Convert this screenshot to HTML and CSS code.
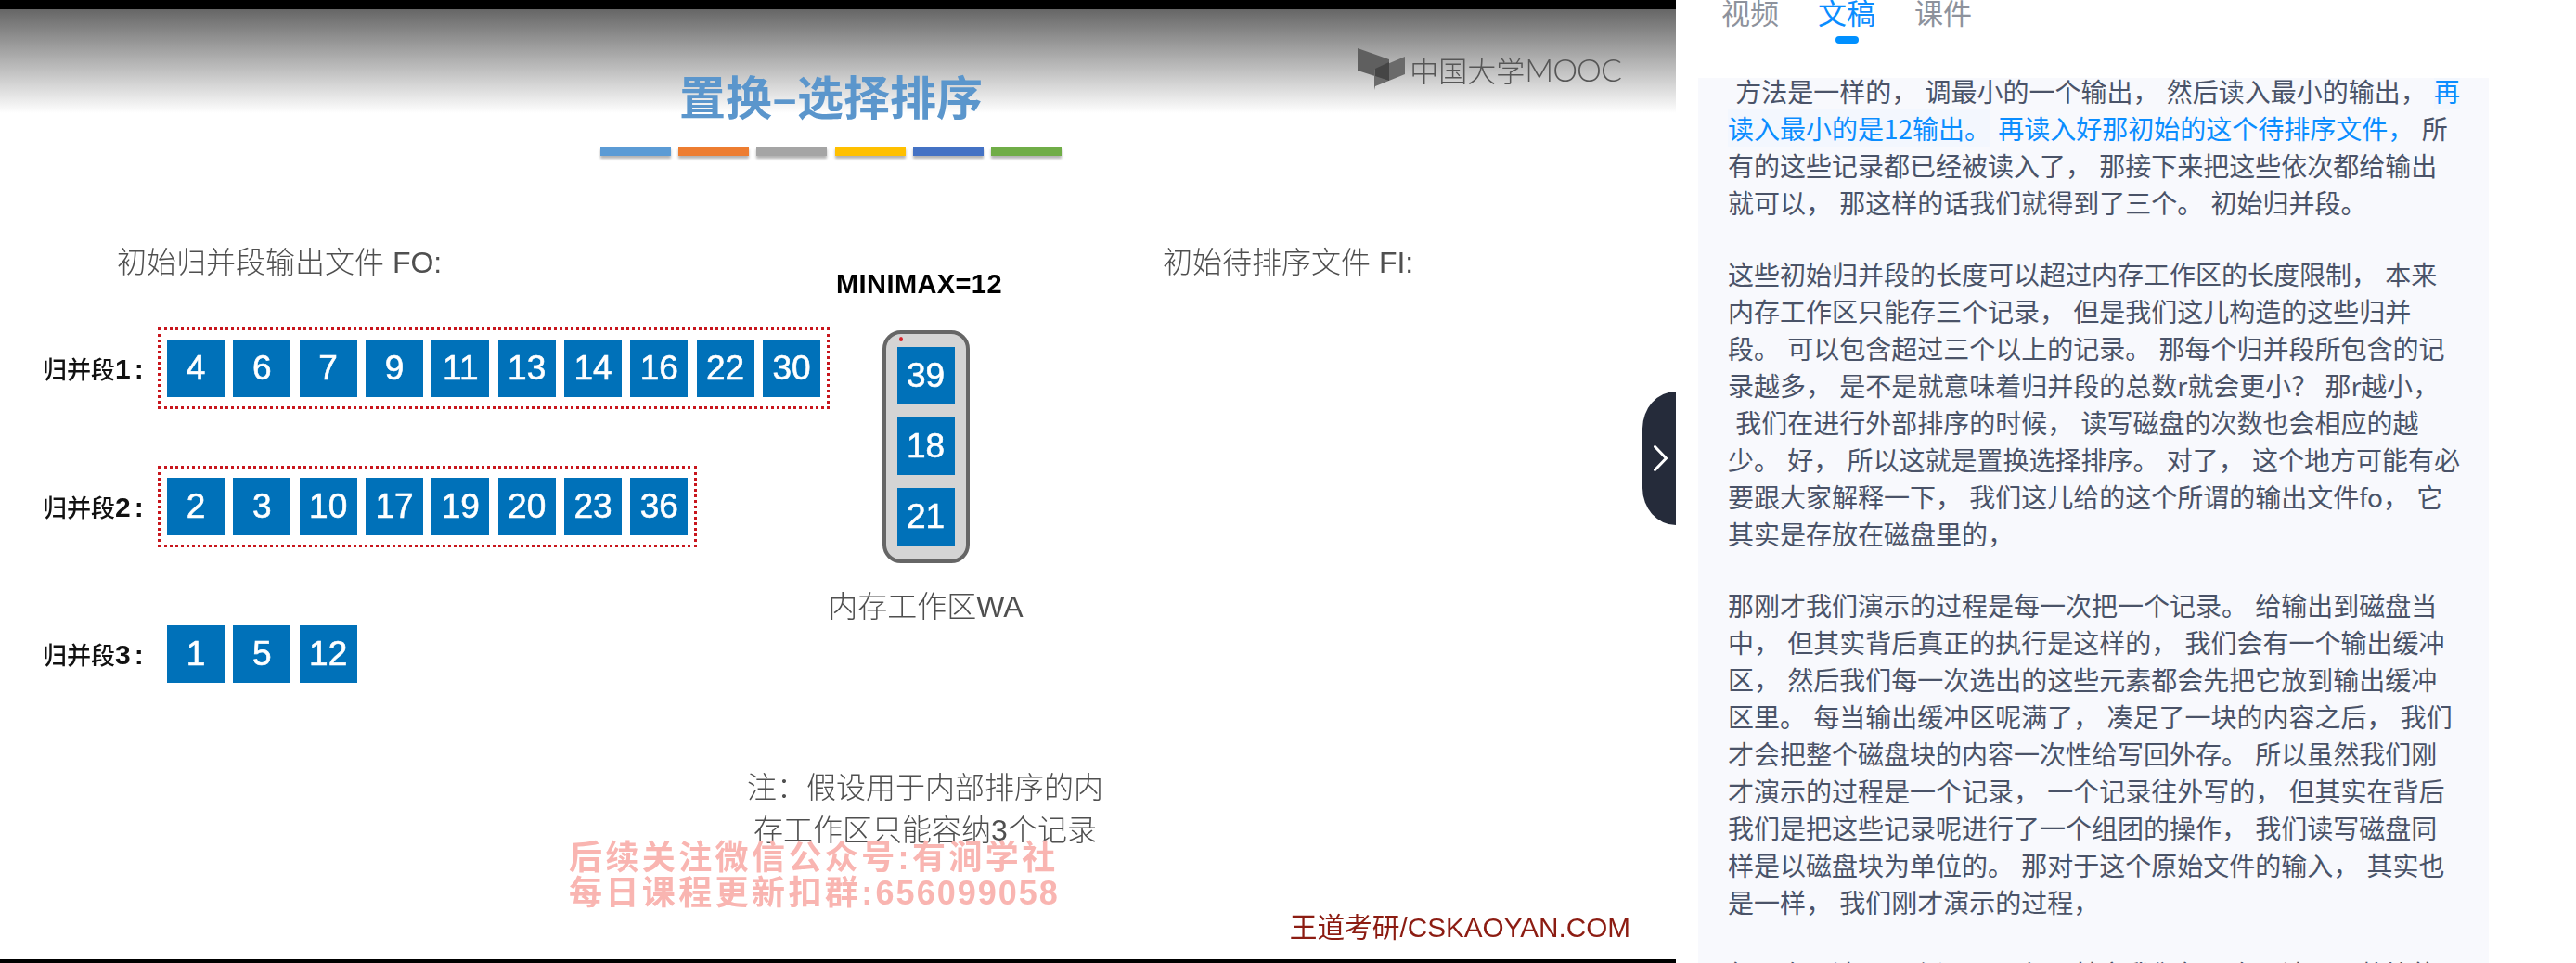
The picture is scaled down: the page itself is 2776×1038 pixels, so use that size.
FILE: index.html
```html
<!DOCTYPE html>
<html lang="zh-CN">
<head>
    <meta charset="UTF-8">
    <meta name="viewport" content="width=device-width, initial-scale=1.0">
    <title>置换-选择排序</title>
    <link rel="stylesheet" href="styles.css">
</head>
<body>
    <div class="page">
        <div class="video">
            <div class="slide">
                <div class="slide-head">
                    <div class="title-block">
                        <h1 class="slide-title">置换–选择排序</h1>
                        <div class="title-bars">
                            <span class="bar bar-blue"></span>
                            <span class="bar bar-orange"></span>
                            <span class="bar bar-gray"></span>
                            <span class="bar bar-yellow"></span>
                            <span class="bar bar-navy"></span>
                            <span class="bar bar-green"></span>
                        </div>
                    </div>
                    <div class="mooc-logo">
                        <svg class="mooc-mark" width="52" height="46" viewBox="0 0 52 46">
                            <path d="M0 1 L34 13 L34 36 L0 25 Z" fill="#5f5f5f"/>
                            <path d="M18 24 L51 10 L51 29 L19 42 L18 46 Z" fill="#6a6a6a"/>
                            <path d="M19 23 L34 16 L34 36 L19 31 Z" fill="#454545"/>
                        </svg>
                        <span class="mooc-cn">中国大学</span><span class="mooc-en">MOOC</span>
                    </div>
                </div>

                <div class="slide-main">
                    <div class="output-col">
                        <div class="file-label output-label">初始归并段输出文件 FO:</div>
                        <div class="segment first">
                            <div class="seg-name"><span class="seg-cn">归并段</span>1:</div>
                            <div class="seg-box">
                                <div class="cell">4</div>
                                <div class="cell">6</div>
                                <div class="cell">7</div>
                                <div class="cell">9</div>
                                <div class="cell">11</div>
                                <div class="cell">13</div>
                                <div class="cell">14</div>
                                <div class="cell">16</div>
                                <div class="cell">22</div>
                                <div class="cell">30</div>
                            </div>
                        </div>
                        <div class="segment second">
                            <div class="seg-name"><span class="seg-cn">归并段</span>2:</div>
                            <div class="seg-box">
                                <div class="cell">2</div>
                                <div class="cell">3</div>
                                <div class="cell">10</div>
                                <div class="cell">17</div>
                                <div class="cell">19</div>
                                <div class="cell">20</div>
                                <div class="cell">23</div>
                                <div class="cell">36</div>
                            </div>
                        </div>
                        <div class="segment third">
                            <div class="seg-name"><span class="seg-cn">归并段</span>3:</div>
                            <div class="seg-box open">
                                <div class="cell">1</div>
                                <div class="cell">5</div>
                                <div class="cell">12</div>
                            </div>
                        </div>
                    </div>

                    <div class="memory-col">
                        <div class="minimax">MINIMAX=12</div>
                        <div class="memory-box">
                            <span class="memory-dot"></span>
                            <div class="cell">39</div>
                            <div class="cell">18</div>
                            <div class="cell">21</div>
                        </div>
                        <div class="file-label memory-label">内存工作区WA</div>
                    </div>

                    <div class="file-label input-label">初始待排序文件 FI:</div>
                </div>

                <div class="slide-note">
                    <div>注：假设用于内部排序的内</div>
                    <div>存工作区只能容纳3个记录</div>
                </div>
                <div class="slide-credit">王道考研/CSKAOYAN.COM</div>

                <div class="watermark">
                    <div>后续关注微信公众号:有涧学社</div>
                    <div>每日课程更新扣群:<span class="wm-num">656099058</span></div>
                </div>
            </div>

            <div class="collapse-tab">
                <svg width="15" height="28" viewBox="0 0 15 28">
                    <path d="M1.5 1.5 L13.5 14 L1.5 26.5" fill="none" stroke="#fff" stroke-width="3" stroke-linecap="round" stroke-linejoin="round"/>
                </svg>
            </div>
        </div>

        <div class="sidebar">
            <div class="tabs">
                <div class="tab">视频</div>
                <div class="tab active">文稿</div>
                <div class="tab">课件</div>
            </div>
            <div class="transcript">
<p class="para"> 方法是一样的， 调最小的一个输出， 然后读入最小的输出， <span class="now now-bg">再
读入最小的是12输出。</span><span class="now"> 再读入好那初始的这个待排序文件，</span> 所
有的这些记录都已经被读入了， 那接下来把这些依次都给输出
就可以， 那这样的话我们就得到了三个。 初始归并段。</p>
<p class="para">这些初始归并段的长度可以超过内存工作区的长度限制， 本来
内存工作区只能存三个记录， 但是我们这儿构造的这些归并
段。 可以包含超过三个以上的记录。 那每个归并段所包含的记
录越多， 是不是就意味着归并段的总数r就会更小？ 那r越小，
 我们在进行外部排序的时候， 读写磁盘的次数也会相应的越
少。 好， 所以这就是置换选择排序。 对了， 这个地方可能有必
要跟大家解释一下， 我们这儿给的这个所谓的输出文件fo， 它
其实是存放在磁盘里的，</p>
<p class="para">那刚才我们演示的过程是每一次把一个记录。 给输出到磁盘当
中， 但其实背后真正的执行是这样的， 我们会有一个输出缓冲
区， 然后我们每一次选出的这些元素都会先把它放到输出缓冲
区里。 每当输出缓冲区呢满了， 凑足了一块的内容之后， 我们
才会把整个磁盘块的内容一次性给写回外存。 所以虽然我们刚
才演示的过程是一个记录， 一个记录往外写的， 但其实在背后
我们是把这些记录呢进行了一个组团的操作， 我们读写磁盘同
样是以磁盘块为单位的。 那对于这个原始文件的输入， 其实也
是一样， 我们刚才演示的过程，</p>
<p class="para">每一次是读入一个记录， 但是其实我们每一次是读入一整块的</p>
            </div>
        </div>
    </div>
</body>
</html>
```

FILE: styles.css
```css
* {
    box-sizing: border-box;
}
body {
    margin: 0;
    background-color: #fff;
    font-family: "Noto Sans CJK SC", "Liberation Sans", sans-serif;
}
.page {
    display: flex;
    width: 2776px;
    height: 1038px;
    overflow: hidden;
}

/* video side */
.video {
    position: relative;
    flex: none;
    width: 1806px;
    height: 1038px;
    border-top: 10px solid #000;
    border-bottom: 4px solid #000;
    background: #fff;
}
.slide {
    position: relative;
    height: 100%;
    background: linear-gradient(#666, #fff) no-repeat;
    background-size: 100% 112px;
    filter: blur(0.5px);
}
.slide-head {
    display: flex;
    justify-content: space-between;
    align-items: flex-start;
    padding: 42px 59px 0 647px;
}
.title-block {
    width: 497px;
    padding-top: 20px;
}
.slide-title {
    margin: 0;
    height: 62px;
    font-size: 50px;
    line-height: 60px;
    font-weight: 700;
    text-align: center;
    white-space: nowrap;
    color: #5b96cc;
}
.title-bars {
    display: flex;
    justify-content: space-between;
    margin-top: 24px;
}
.bar {
    width: 76px;
    height: 10px;
    box-shadow: 0 3px 3px rgba(0, 0, 0, 0.3);
}
.bar-blue { background-color: #5b9bd5; }
.bar-orange { background-color: #ed7d31; }
.bar-gray { background-color: #a5a5a5; }
.bar-yellow { background-color: #ffc000; }
.bar-navy { background-color: #4472c4; }
.bar-green { background-color: #70ad47; }

.mooc-logo {
    display: flex;
    align-items: center;
    height: 46px;
    margin-top: -1px;
    color: #565656;
    white-space: nowrap;
}
.mooc-mark {
    flex: none;
    margin-right: 4px;
}
.mooc-cn {
    font-size: 31px;
    font-weight: 300;
}
.mooc-en {
    font-family: Lato, "Liberation Sans", sans-serif;
    font-size: 34px;
    font-weight: 300;
    letter-spacing: -1px;
}

.slide-main {
    display: flex;
    margin-top: 95px;
}
.file-label {
    font-family: "Liberation Sans", "Noto Sans CJK SC", sans-serif;
    font-size: 32px;
    line-height: 40px;
    font-weight: 300;
    color: #4f4f4f;
    white-space: nowrap;
}
.output-col {
    flex: none;
    width: 895px;
    padding-left: 46px;
}
.output-label {
    margin-left: 80px;
}
.segment {
    display: flex;
    align-items: center;
}
.segment.first { margin-top: 50px; }
.segment.second { margin-top: 61px; }
.segment.third { margin-top: 71px; }
.seg-name {
    flex: none;
    width: 124px;
    font-family: "Liberation Sans", "Noto Sans CJK SC", sans-serif;
    font-size: 30px;
    line-height: 40px;
    font-weight: 700;
    letter-spacing: 4px;
    color: #111;
    white-space: nowrap;
}
.seg-cn {
    font-family: "Noto Sans CJK SC", sans-serif;
    font-size: 26px;
    font-weight: 500;
    letter-spacing: 0;
}
.seg-box {
    display: flex;
    gap: 9.33px;
    padding: 10px 7px;
    border: 3px dotted #c8161d;
}
.seg-box.open {
    border-color: transparent;
}
.cell {
    flex: none;
    display: flex;
    align-items: center;
    justify-content: center;
    width: 62px;
    height: 62px;
    background-color: #0071b9;
    color: #fff;
    font-family: "Liberation Sans", Arial, sans-serif;
    font-size: 37px;
    -webkit-text-stroke: 0.6px #fff;
}

.memory-col {
    flex: none;
    display: flex;
    flex-direction: column;
    align-items: center;
    width: 205px;
}
.minimax {
    margin: 23px 14px 0 0;
    font-family: "Liberation Sans", Arial, sans-serif;
    font-size: 29px;
    line-height: 40px;
    font-weight: 700;
    letter-spacing: 0.4px;
    color: #000;
    white-space: nowrap;
}
.memory-box {
    position: relative;
    display: flex;
    flex-direction: column;
    align-items: center;
    gap: 14px;
    width: 94px;
    height: 251px;
    margin-top: 30px;
    padding-top: 14px;
    background-color: #d4d4d4;
    border: 4px solid #666;
    border-radius: 20px;
}
.memory-dot {
    position: absolute;
    top: 3px;
    left: 14px;
    width: 4px;
    height: 5px;
    background-color: #d8222a;
    border-radius: 50%;
}
.memory-label {
    margin-top: 27px;
}
.input-label {
    margin-left: 153px;
}

.slide-note {
    width: 400px;
    margin: 77px 0 0 797px;
    font-family: "Liberation Sans", "Noto Sans CJK SC", sans-serif;
    font-size: 32px;
    line-height: 46px;
    font-weight: 300;
    text-align: center;
    color: #4f4f4f;
    white-space: nowrap;
}
.slide-credit {
    margin-top: 62px;
    padding-right: 49px;
    font-size: 29.7px;
    line-height: 40px;
    font-family: "Liberation Sans", "Noto Sans CJK SC", sans-serif;
    text-align: right;
    color: #8c1c12;
}
.watermark {
    position: absolute;
    top: 896px;
    left: 613px;
    width: 524px;
    font-family: "Liberation Sans", "Noto Sans CJK SC", sans-serif;
    font-size: 36px;
    line-height: 38px;
    font-weight: 700;
    letter-spacing: 3.4px;
    color: #f9b5b1;
    white-space: nowrap;
}
.wm-num {
    letter-spacing: 2px;
}

.collapse-tab {
    position: absolute;
    top: 412px;
    right: 0;
    display: flex;
    align-items: center;
    width: 36px;
    height: 144px;
    padding-left: 12px;
    background-color: #252b3a;
    border-radius: 36px 0 0 36px / 40px 0 0 40px;
}

/* transcript side */
.sidebar {
    flex: 1;
    height: 1038px;
    overflow: hidden;
}
.tabs {
    display: flex;
    gap: 42px;
    height: 91px;
    margin-top: -7px;
    padding-left: 49px;
}
.tab {
    position: relative;
    font-size: 31px;
    line-height: 40px;
    color: #8d929c;
}
.tab.active {
    color: #0a8dff;
}
.tab.active::after {
    content: "";
    position: absolute;
    top: 46px;
    left: 19px;
    width: 25px;
    height: 8px;
    background-color: #0090ff;
    border-radius: 4px;
}
.transcript {
    width: 852px;
    height: 954px;
    margin-left: 24px;
    padding-left: 32px;
    overflow: hidden;
    background-color: #f8f9fd;
}
.para {
    margin: 0 0 37px;
    font-size: 28px;
    line-height: 40px;
    word-spacing: 2px;
    color: #4a5368;
    white-space: pre;
}
.para:first-child {
    margin-top: -6px;
}
.now {
    color: #0a8dff;
}
.now-bg {
    background-color: #f3f7fe;
}
```
